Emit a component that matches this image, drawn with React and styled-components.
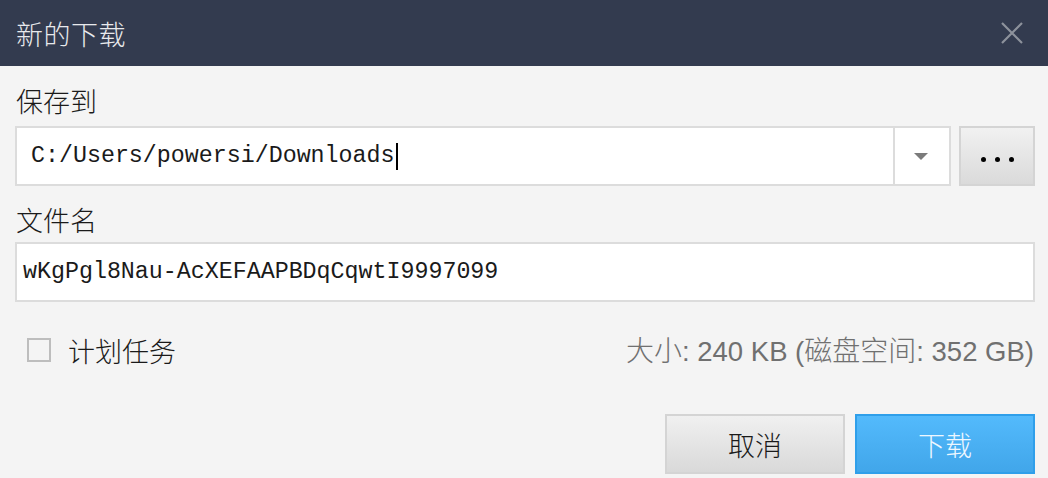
import React from 'react';
import styled, { createGlobalStyle } from 'styled-components';

const GlobalStyle = createGlobalStyle`
  html, body {
    margin: 0;
    padding: 0;
    background: #f4f4f4;
  }
  * {
    box-sizing: border-box;
  }
`;

const cjk = `"Noto Sans CJK SC", "Liberation Sans", sans-serif`;

const Dialog = styled.div`
  width: 1048px;
  height: 478px;
  background: #f4f4f4;
  overflow: hidden;
`;

const TitleBar = styled.div`
  height: 66px;
  background: #333b4f;
  display: flex;
  align-items: center;
  justify-content: space-between;
  padding: 0 24px 0 16px;
`;

const Title = styled.h1`
  margin: 0;
  font-family: ${cjk};
  font-weight: 300;
  font-size: 27px;
  color: #e8e9ec;
  letter-spacing: 0.5px;
`;

const CloseButton = styled.button`
  width: 24px;
  height: 24px;
  padding: 0;
  border: none;
  background: none;
  display: flex;
  align-items: center;
  justify-content: center;
  cursor: pointer;
`;

const Body = styled.div`
  padding: 0 13px 0 15px;
  display: flex;
  flex-direction: column;
`;

const Label = styled.div`
  height: 40px;
  line-height: 40px;
  margin-top: ${({ $top }) => $top}px;
  font-family: ${cjk};
  font-weight: 300;
  font-size: 27px;
  color: #1a1a1a;
  padding-left: 1px;
`;

const PathRow = styled.div`
  display: flex;
  gap: 8px;
  margin-top: 5px;
  height: 60px;
`;

const Field = styled.div`
  flex: ${({ $grow }) => ($grow ? '1 1 auto' : 'none')};
  height: 60px;
  margin-top: ${({ $top }) => $top || 0}px;
  background: #fff;
  border: 2px solid #dcdcdc;
  display: flex;
  align-items: center;
`;

const FieldText = styled.div`
  flex: 1;
  display: flex;
  align-items: center;
  padding-left: ${({ $pad }) => $pad}px;
  font-family: "Liberation Mono", "DejaVu Sans Mono", monospace;
  font-size: 23.3px;
  color: #1a1a1a;
  white-space: nowrap;
`;

const Caret = styled.span`
  display: inline-block;
  width: 2px;
  height: 27px;
  background: #000;
  margin-left: 1px;
`;

const DropToggle = styled.div`
  width: 56px;
  height: 100%;
  border-left: 2px solid #dcdcdc;
  display: flex;
  align-items: center;
  justify-content: center;
`;

const Arrow = styled.span`
  width: 0;
  height: 0;
  border-left: 7px solid transparent;
  border-right: 7px solid transparent;
  border-top: 7px solid #7b7b7b;
  margin-right: 2px;
`;

const BrowseButton = styled.button`
  width: 76px;
  height: 60px;
  padding: 6px 0 0;
  border: 2px solid #d4d4d4;
  background: linear-gradient(#f1f1f1, #dadada);
  display: flex;
  align-items: center;
  justify-content: center;
  gap: 9px;
`;

const Dot = styled.span`
  width: 5px;
  height: 5px;
  border-radius: 50%;
  background: #000;
`;

const OptionRow = styled.div`
  margin-top: 28px;
  height: 40px;
  display: flex;
  align-items: center;
  justify-content: space-between;
`;

const CheckLabel = styled.label`
  display: flex;
  align-items: center;
  gap: 17px;
  padding-left: 12px;
  font-family: ${cjk};
  font-weight: 300;
  font-size: 27px;
  color: #1a1a1a;
`;

const CheckBox = styled.span`
  width: 24px;
  height: 24px;
  border: 2px solid #bdbdbd;
  background: #f4f4f4;
`;

const SizeInfo = styled.div`
  font-family: "Liberation Sans", "Noto Sans CJK SC", sans-serif;
  font-size: 27.5px;
  color: #707070;
  padding-right: 1px;
  margin-top: -3px;
  white-space: nowrap;
`;

const Han = styled.span`
  font-family: ${cjk};
  font-weight: 300;
  font-size: 28px;
`;

const ButtonRow = styled.div`
  margin-top: 44px;
  display: flex;
  justify-content: flex-end;
  gap: 10px;
`;

const ActionButton = styled.button`
  width: 180px;
  height: 60px;
  padding: 0;
  font-family: ${cjk};
  font-weight: 300;
  font-size: 27px;
  border: 2px solid ${({ $primary }) => ($primary ? '#2f9fea' : '#d4d4d4')};
  background: ${({ $primary }) =>
    $primary
      ? 'linear-gradient(#53bafc, #41a6ea)'
      : 'linear-gradient(#f0f0f0, #d9d9d9)'};
  color: ${({ $primary }) => ($primary ? '#eef7ff' : '#1a1a1a')};
`;

export default function App() {
  return (
    <>
      <GlobalStyle />
      <Dialog>
        <TitleBar>
          <Title>新的下载</Title>
          <CloseButton aria-label="关闭">
            <svg width="24" height="24" viewBox="0 0 24 24">
              <path d="M2 2 L22 22 M22 2 L2 22" stroke="#8d929c" strokeWidth="2.2" fill="none" />
            </svg>
          </CloseButton>
        </TitleBar>
        <Body>
          <Label $top={15}>保存到</Label>
          <PathRow>
            <Field $grow>
              <FieldText $pad={14}>
                C:/Users/powersi/Downloads
                <Caret />
              </FieldText>
              <DropToggle>
                <Arrow />
              </DropToggle>
            </Field>
            <BrowseButton aria-label="浏览">
              <Dot />
              <Dot />
              <Dot />
            </BrowseButton>
          </PathRow>
          <Label $top={14}>文件名</Label>
          <Field $top={2}>
            <FieldText $pad={6}>wKgPgl8Nau-AcXEFAAPBDqCqwtI9997099</FieldText>
          </Field>
          <OptionRow>
            <CheckLabel>
              <CheckBox />
              计划任务
            </CheckLabel>
            <SizeInfo>
              <Han>大小</Han>: 240 KB (<Han>磁盘空间</Han>: 352 GB)
            </SizeInfo>
          </OptionRow>
          <ButtonRow>
            <ActionButton>取消</ActionButton>
            <ActionButton $primary>下载</ActionButton>
          </ButtonRow>
        </Body>
      </Dialog>
    </>
  );
}
